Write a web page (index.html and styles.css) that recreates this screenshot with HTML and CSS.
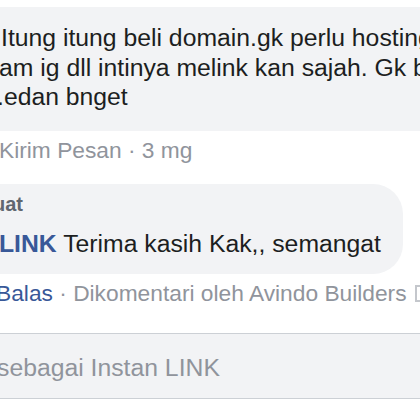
FILE: index.html
```html
<!DOCTYPE html>
<html lang="id">
<head>
    <meta charset="UTF-8">
    <meta name="viewport" content="width=device-width, initial-scale=1.0">
    <title>Komentar</title>
    <link rel="stylesheet" href="styles.css">
</head>
<body>
    <div class="thread">
        <div class="comment-bubble">
            <span class="line line-1">Itung itung beli domain.gk perlu hosting</span>
            <span class="line line-2">am ig dll intinya melink kan sajah. Gk bakal</span>
            <span class="line line-3">.edan bnget</span>
        </div>
        <div class="meta meta-first">Kirim Pesan · 3 mg</div>

        <div class="reply-bubble">
            <div class="badge">uat</div>
            <div class="reply-text"><a class="name" href="#">LINK</a> Terima kasih Kak,, semangat</div>
        </div>
        <div class="meta meta-reply">
            <a class="action" href="#">Balas</a> · Dikomentari oleh Avindo Builders <span class="icon-box"></span>
        </div>

        <div class="composer">
            <span class="placeholder">sebagai Instan LINK</span>
        </div>
    </div>
</body>
</html>
```

FILE: styles.css
```css
body {
    margin: 0;
    background-color: #ffffff;
    font-family: "Liberation Sans", Arial, sans-serif;
    color: #1c1e21;
    overflow: hidden;
}

.thread {
    width: 420px;
    height: 420px;
    overflow: hidden;
    padding-top: 7px;
    box-sizing: border-box;
}

.comment-bubble {
    background-color: #f2f3f5;
    padding: 16.4px 0 19.1px 0;
    font-size: 24.75px;
    line-height: 29.5px;
    white-space: nowrap;
    overflow: hidden;
}

.line {
    display: block;
}
.line-1 {
    margin-left: 1px;
}
.line-2 {
    margin-left: -1px;
}
.line-3 {
    margin-left: -3px;
}

.meta {
    font-size: 22.75px;
    line-height: 26px;
    color: #90949c;
    white-space: nowrap;
    overflow: hidden;
}
.meta-first {
    margin-top: 5.6px;
    margin-left: -1px;
}
.meta-reply {
    margin-top: 5.6px;
    margin-left: -4px;
}

.reply-bubble {
    margin-top: 21.4px;
    width: 403px;
    background-color: #f2f3f5;
    border-radius: 0 30px 30px 0;
    padding: 7px 0 15.8px 0;
    box-sizing: border-box;
    overflow: hidden;
}

.badge {
    font-size: 20px;
    line-height: 26px;
    font-weight: bold;
    color: #606770;
    margin-left: -7px;
}

.reply-text {
    margin-top: 11.7px;
    font-size: 24.75px;
    line-height: 29.5px;
    white-space: nowrap;
    margin-left: -1px;
}

.name {
    font-weight: bold;
    color: #385898;
    text-decoration: none;
}

.action {
    color: #385898;
    text-decoration: none;
}

.icon-box {
    display: inline-block;
    width: 12px;
    height: 13px;
    border: 2px solid #c4c7cc;
    vertical-align: -1px;
    margin-left: 2px;
}

.composer {
    margin-top: 27.4px;
    height: 45.3px;
    background-color: #f2f3f5;
    border-top: 1px solid #ccd0d5;
    border-bottom: 1px solid #ccd0d5;
    padding-top: 18.7px;
    font-size: 24.75px;
    line-height: 29.5px;
    color: #90949c;
    white-space: nowrap;
}
.placeholder {
    display: block;
    margin-left: -3px;
}
```
